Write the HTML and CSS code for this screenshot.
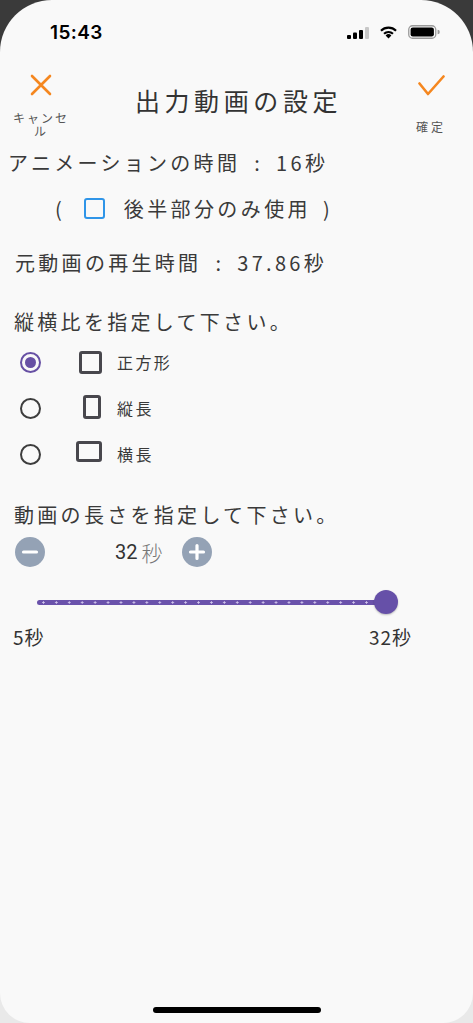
FILE: index.html
```html
<!DOCTYPE html>
<html lang="ja">
<head>
<meta charset="utf-8">
<title>出力動画の設定</title>
<link rel="stylesheet" href="styles.css">
</head>
<body>
<div class="screen">
  <div class="status">
    <span class="time">15:43</span>
    <div class="status-icons">
      <svg class="signal" width="22" height="12" viewBox="0 0 22 12">
        <rect x="0" y="8" width="4" height="4" rx="1" fill="#000"/>
        <rect x="6" y="5.5" width="4" height="6.5" rx="1" fill="#000"/>
        <rect x="12" y="3" width="4" height="9" rx="1" fill="#000"/>
        <rect x="18" y="0" width="4" height="12" rx="1" fill="#c8c8c8"/>
      </svg>
      <svg class="wifi" width="19" height="14" viewBox="0 0 19 14">
        <path d="M9.5 13.5 L6.6 10.4 A4.2 4.2 0 0 1 12.4 10.4 Z" fill="#000"/>
        <path d="M4.3 8.1 A7.4 7.4 0 0 1 14.7 8.1 L13.2 9.6 A5.3 5.3 0 0 0 5.8 9.6 Z" fill="#000"/>
        <path d="M1.2 5 A11.8 11.8 0 0 1 17.8 5 L16.3 6.5 A9.6 9.6 0 0 0 2.7 6.5 Z" fill="#000"/>
      </svg>
      <svg class="battery" width="32" height="14" viewBox="0 0 32 14">
        <rect x="0.75" y="0.75" width="27" height="12.5" rx="3.8" fill="none" stroke="#9a9a9a" stroke-width="1.3"/>
        <rect x="2.6" y="2.6" width="23.3" height="8.8" rx="2.2" fill="#000"/>
        <path d="M29.6 4.8 v4.4 a2 2 0 0 0 0 -4.4 z" fill="#9a9a9a"/>
      </svg>
    </div>
  </div>

  <header class="header">
    <div class="hbtn hbtn-left">
      <svg class="hicon" width="22" height="22" viewBox="0 0 22 22">
        <path d="M2 2 L20 20 M20 2 L2 20" stroke="#f5871f" stroke-width="2.6" stroke-linecap="round"/>
      </svg>
      <span class="hlabel cancel">キャンセル</span>
    </div>
    <h1 class="title">出力動画の設定</h1>
    <div class="hbtn hbtn-right">
      <svg class="hicon check" width="27" height="21" viewBox="0 0 27 21">
        <path d="M1.5 8.5 L10 19 L25.5 1.5" fill="none" stroke="#f5871f" stroke-width="2.6" stroke-linecap="round" stroke-linejoin="round"/>
      </svg>
      <span class="hlabel ok">確定</span>
    </div>
  </header>

  <main class="content">
    <div class="row row-anim">アニメーションの時間<span class="sep">:</span>16秒</div>
    <div class="row row-check">
      <span class="paren">(</span>
      <span class="checkbox"></span>
      <span class="check-text">後半部分のみ使用</span>
      <span class="paren">)</span>
    </div>
    <div class="row row-orig">元動画の再生時間<span class="sep">:</span>37.86秒</div>

    <div class="row heading heading-ratio">縦横比を指定して下さい。</div>
    <div class="radio-row">
      <span class="radio selected"></span>
      <span class="shape-wrap"><span class="shape square"></span></span>
      <span class="radio-label">正方形</span>
    </div>
    <div class="radio-row">
      <span class="radio"></span>
      <span class="shape-wrap"><span class="shape portrait"></span></span>
      <span class="radio-label">縦長</span>
    </div>
    <div class="radio-row">
      <span class="radio"></span>
      <span class="shape-wrap"><span class="shape landscape"></span></span>
      <span class="radio-label">横長</span>
    </div>

    <div class="row heading heading-length">動画の長さを指定して下さい。</div>
    <div class="stepper">
      <span class="step-btn">
        <svg width="30" height="30" viewBox="0 0 30 30"><circle cx="15" cy="15" r="15" fill="#94a2b5"/><path d="M8.5 15 H21.5" stroke="#fff" stroke-width="3.2" stroke-linecap="round"/></svg>
      </span>
      <span class="step-value"><span class="num">32</span><span class="unit">秒</span></span>
      <span class="step-btn">
        <svg width="30" height="30" viewBox="0 0 30 30"><circle cx="15" cy="15" r="15" fill="#94a2b5"/><path d="M8.5 15 H21.5 M15 8.5 V21.5" stroke="#fff" stroke-width="3.2" stroke-linecap="round"/></svg>
      </span>
    </div>
    <div class="slider">
      <div class="track">
        <span class="thumb"></span>
      </div>
    </div>
    <div class="slider-labels">
      <span>5秒</span>
      <span>32秒</span>
    </div>
  </main>

  <div class="home-indicator"></div>
</div>
</body>
</html>
```

FILE: styles.css
```css
* { box-sizing: border-box; }

html, body {
  margin: 0;
  padding: 0;
}

body {
  width: 473px;
  height: 1023px;
  overflow: hidden;
  background: linear-gradient(#3a3a3a 0, #3a3a3a 80px, #e9e9e9 80px);
  font-family: "Noto Sans CJK JP", "Noto Sans", sans-serif;
  color: #3a3a3a;
}

.screen {
  width: 473px;
  height: 1023px;
  background: #f9f9f9;
  border-radius: 52px 52px 30px 30px;
  position: relative;
  display: flex;
  flex-direction: column;
}

/* status bar */
.status {
  height: 64px;
  display: flex;
  align-items: center;
  justify-content: space-between;
  padding: 0 33px 0 50px;
}
.time {
  font-family: Inter, "Liberation Sans", sans-serif;
  font-weight: 600;
  font-size: 19px;
  letter-spacing: 0.4px;
  color: #000;
}
.status-icons {
  display: flex;
  align-items: center;
  gap: 10px;
}
.signal { margin-top: 1px; }

/* header */
.header {
  height: 78px;
  display: grid;
  grid-template-columns: 82px 1fr 82px;
}
.hbtn {
  display: flex;
  flex-direction: column;
  align-items: center;
}
.hbtn-left .hicon { margin-top: 10px; }
.hbtn-right { padding-right: 2px; }
.hbtn-right .hicon { margin-top: 11px; }
.hlabel {
  font-size: 12px;
  letter-spacing: 2px;
  color: #555;
  text-align: center;
  line-height: 13px;
}
.cancel {
  width: 62px;
  margin-top: 15px;
}
.ok { margin-top: 24px; letter-spacing: 3px; }

.title {
  margin: 0;
  font-weight: 400;
  font-size: 25px;
  letter-spacing: 4.6px;
  text-align: center;
  line-height: 30px;
  padding-top: 21px;
  padding-left: 4px;
  color: #333;
}

/* content */
.content {
  display: flex;
  flex-direction: column;
}
.row {
  display: flex;
  align-items: center;
  font-size: 20px;
  letter-spacing: 3.3px;
  white-space: nowrap;
}
.sep {
  margin: 0 13px 0 14px;
}
.row-anim {
  height: 40px;
  padding-left: 8px;
}
.row-check {
  height: 52px;
  padding-left: 55px;
}
.paren { font-size: 20px; letter-spacing: 0; }
.checkbox {
  width: 21px;
  height: 21px;
  border: 2.5px solid #2f95e8;
  border-radius: 3px;
  margin-left: 22px;
  margin-right: 19px;
}
.check-text { letter-spacing: 3.4px; margin-right: 12px; }
.row-orig {
  height: 56px;
  padding-left: 15px;
}
.heading {
  height: 36px;
  padding-left: 14px;
}
.heading-ratio { margin-top: 13px; }
.heading-length { margin-top: 19px; }

.radio-row {
  height: 46px;
  display: flex;
  align-items: center;
  padding-left: 20px;
}
.radio {
  width: 21px;
  height: 21px;
  border-radius: 50%;
  border: 2.2px solid #3d3d3d;
  position: relative;
}
.radio.selected {
  border-color: #6750a4;
}
.radio.selected::after {
  content: "";
  position: absolute;
  left: 3px;
  top: 3px;
  width: 11px;
  height: 11px;
  border-radius: 50%;
  background: #6750a4;
}
.shape-wrap {
  width: 28px;
  margin-left: 38px;
  display: flex;
  justify-content: center;
}
.shape {
  border: 3px solid #48474d;
  border-radius: 3px;
}
.square { width: 23px; height: 23px; margin-left: -5px; }
.portrait { width: 18px; height: 24px; margin-left: -3px; margin-top: -2px; }
.landscape { width: 26px; height: 21px; margin-left: -8px; margin-top: -6px; }
.radio-label {
  margin-left: 10px;
  font-size: 16px;
  letter-spacing: 2.4px;
  color: #3a3a3a;
}

/* stepper */
.stepper {
  height: 40px;
  display: flex;
  align-items: center;
  padding-left: 15px;
}
.step-btn { display: flex; width: 30px; height: 30px; }
.step-value {
  width: 137px;
  display: flex;
  align-items: center;
  padding-left: 70px;
}
.step-value .num {
  font-family: Roboto, "Liberation Sans", sans-serif;
  font-size: 20px;
  color: #333;
}
.step-value .unit {
  font-weight: 300;
  color: #777;
  font-size: 21px;
  margin-left: 4px;
}

/* slider */
.slider {
  height: 40px;
  margin-top: 10px;
  display: flex;
  align-items: center;
  padding-left: 37px;
}
.track {
  position: relative;
  width: 349px;
  height: 5px;
  border-radius: 3px;
  background:
    radial-gradient(circle, rgba(230, 220, 250, 0.85) 0, rgba(230, 220, 250, 0.85) 0.9px, transparent 1.3px) 0 0 / 12.926px 5px repeat-x,
    #6a52ab;
}
.thumb {
  position: absolute;
  right: -12px;
  top: -9.5px;
  width: 24px;
  height: 24px;
  border-radius: 50%;
  background: #6650a8;
  box-shadow: 0 1px 2px rgba(0, 0, 0, 0.25);
}

.slider-labels {
  height: 28px;
  display: flex;
  justify-content: space-between;
  width: 412px;
  padding-left: 13px;
  font-size: 19px;
  letter-spacing: 1px;
  color: #333;
  align-items: center;
}

.home-indicator {
  position: absolute;
  left: 153px;
  bottom: 10px;
  width: 168px;
  height: 6px;
  border-radius: 3px;
  background: #000;
}
```
